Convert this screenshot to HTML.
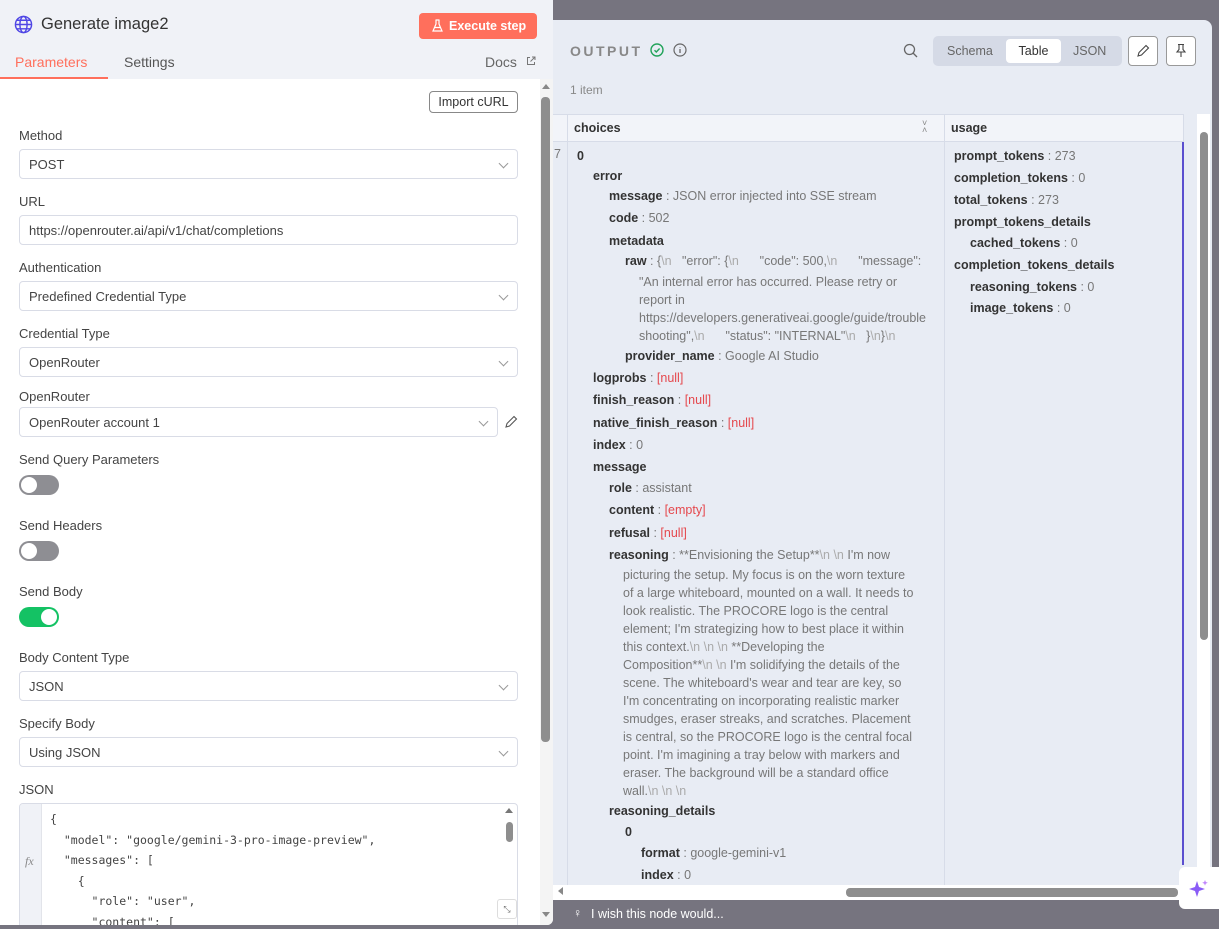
<!DOCTYPE html>
<html><head><meta charset="utf-8"><style>
*{box-sizing:border-box;margin:0;padding:0}
body{width:1219px;height:929px;overflow:hidden;background:#76747f;font-family:"Liberation Sans",sans-serif;position:relative;color:#333}
.a{position:absolute;white-space:nowrap}
#right{position:absolute;left:540px;top:20px;width:672px;height:880px;background:#e8ecf4;border-radius:8px}
#left{position:absolute;left:0;top:0;width:553px;height:925px;background:#fff;border-radius:0 0 6px 0;overflow:hidden}
.lbl{position:absolute;left:19px;font-size:13px;color:#444}
.inp{position:absolute;left:19px;width:499px;height:30px;border:1px solid #d9dce6;border-radius:4px;font-size:13px;color:#444;padding:7px 9px;background:#fff}
.chev{position:absolute;right:10px;top:10px;width:7px;height:7px;border-right:1px solid #999;border-bottom:1px solid #999;transform:rotate(45deg)}
.tog{position:absolute;left:19px;width:40px;height:20px;border-radius:10px;background:#8e8e93}
.tog::after{content:"";position:absolute;left:2px;top:2px;width:16px;height:16px;border-radius:50%;background:#fff}
.tog.on{background:#14c264}.tog.on::after{left:22px}
.t{position:absolute;white-space:nowrap;font-size:12.5px;line-height:18px;color:#777}
.t b{color:#333;font-weight:600}
.n{color:#aaa}
.r{color:#e5484d}
</style></head><body>
<div id="right">
 <div class="a" style="left:30px;top:23px;font-size:14px;letter-spacing:2.5px;color:#888;font-weight:600">OUTPUT</div>
 <svg class="a" style="left:110px;top:23px" width="14" height="14" viewBox="0 0 14 14"><circle cx="7" cy="7" r="6" fill="none" stroke="#22a35a" stroke-width="1.4"/><path d="M4.5 7.2l1.8 1.8 3.3-3.5" fill="none" stroke="#22a35a" stroke-width="1.4"/></svg>
 <svg class="a" style="left:133px;top:23px" width="14" height="14" viewBox="0 0 14 14"><circle cx="7" cy="7" r="6" fill="none" stroke="#666" stroke-width="1.2"/><path d="M7 6v4M7 4v.5" stroke="#666" stroke-width="1.3"/></svg>
 <svg class="a" style="left:363px;top:23px" width="15" height="15" viewBox="0 0 15 15"><circle cx="6.5" cy="6.5" r="5" fill="none" stroke="#666" stroke-width="1.3"/><path d="M10 10l4 4" stroke="#666" stroke-width="1.3"/></svg>
 <div class="a" style="left:393px;top:16px;width:189px;height:30px;background:#d5dae6;border-radius:5px"></div>
 <div class="a" style="left:407px;top:24px;font-size:12.5px;color:#666">Schema</div>
 <div class="a" style="left:466px;top:19px;width:55px;height:24px;background:#fff;border-radius:4px;font-size:12.5px;color:#333;text-align:center;line-height:24px">Table</div>
 <div class="a" style="left:533px;top:24px;font-size:12.5px;color:#666">JSON</div>
 <div class="a" style="left:588px;top:16px;width:30px;height:30px;border:1px solid #999;border-radius:4px;background:#fff"></div>
 <svg class="a" style="left:596px;top:24px" width="14" height="14" viewBox="0 0 14 14"><path d="M2 12l1-3.5 7-7 2.5 2.5-7 7z" fill="none" stroke="#444" stroke-width="1.1"/></svg>
 <div class="a" style="left:626px;top:16px;width:30px;height:30px;border:1px solid #999;border-radius:4px;background:#fff"></div>
 <svg class="a" style="left:634px;top:23px" width="14" height="15" viewBox="0 0 14 15"><path d="M4 1.5h6M5 1.5v5l-2 2.5h8l-2-2.5v-5M7 9v5" fill="none" stroke="#444" stroke-width="1.1"/></svg>
 <div class="a" style="left:30px;top:63px;font-size:12px;color:#888">1 item</div>
 <div class="a" style="left:13px;top:94px;width:631px;height:771px;background:#e8ecf4"></div>
 <div class="a" style="left:13px;top:94px;width:631px;height:28px;background:#f2f4f9;border-top:1px solid #d7dce8;border-bottom:1px solid #d7dce8"></div>
 <div class="a" style="left:27px;top:94px;width:1px;height:771px;background:#d7dce8"></div>
 <div class="a" style="left:404px;top:94px;width:1px;height:771px;background:#d7dce8"></div>
 <div class="a" style="left:643px;top:94px;width:1px;height:28px;background:#d7dce8"></div>
 <div class="a" style="left:642px;top:122px;width:2px;height:723px;background:#5b4fcf"></div>
 <div class="a" style="left:34px;top:101px;font-size:12.5px;font-weight:600;color:#333">choices</div>
 <div class="a" style="left:382px;top:100px;font-size:9px;color:#888;line-height:7px">˅<br>˄</div>
 <div class="a" style="left:411px;top:101px;font-size:12.5px;font-weight:600;color:#333">usage</div>
 <div class="a" style="left:14px;top:127px;font-size:12.5px;color:#777">7</div>
 <div class="a" style="left:657px;top:94px;width:13px;height:771px;background:#fff"></div>
 <div class="a" style="left:660px;top:112px;width:8px;height:508px;background:#8e8e8e;border-radius:4px"></div>
 <div class="a" style="left:13px;top:865px;width:644px;height:15px;background:#fff"></div>
 <div class="a" style="left:306px;top:868px;width:332px;height:9px;background:#8e8e8e;border-radius:4px"></div>
 <div class="a" style="left:18px;top:867px;width:0;height:0;border-top:4px solid transparent;border-bottom:4px solid transparent;border-right:5px solid #888"></div>
</div>
<div class="a" style="left:573px;top:906px;font-size:12px;color:#fff">♀</div>
<div class="a" style="left:591px;top:907px;font-size:12.5px;color:#fff">I wish this node would...</div>
<div class="a" style="left:1179px;top:867px;width:40px;height:42px;background:#fff;border-radius:6px 0 0 6px"></div>
<svg class="a" style="left:1188px;top:878px" width="22" height="22" viewBox="0 0 22 22"><path d="M9 3l2 6 6 2-6 2-2 6-2-6-6-2 6-2z" fill="#8a5cf6"/><path d="M17 2l.8 2 2 .8-2 .8-.8 2-.8-2-2-.8 2-.8z" fill="#c084fc"/></svg>

<div class="t" style="left:577px;top:147px"><b>0</b></div>
<div class="t" style="left:593px;top:167px"><b>error</b></div>
<div class="t" style="left:609px;top:187px"><b>message</b> : JSON error injected into SSE stream</div>
<div class="t" style="left:609px;top:209px"><b>code</b> : 502</div>
<div class="t" style="left:609px;top:232px"><b>metadata</b></div>
<div class="t" style="left:625px;top:252px"><b>raw</b> : {<span class="n">\n</span>&nbsp;&nbsp;&nbsp;"error": {<span class="n">\n</span>&nbsp;&nbsp;&nbsp;&nbsp;&nbsp;&nbsp;"code": 500,<span class="n">\n</span>&nbsp;&nbsp;&nbsp;&nbsp;&nbsp;&nbsp;"message":</div>
<div class="t" style="left:639px;top:273px">"An internal error has occurred. Please retry or</div>
<div class="t" style="left:639px;top:291px">report in</div>
<div class="t" style="left:639px;top:309px">https://developers.generativeai.google/guide/trouble</div>
<div class="t" style="left:639px;top:327px">shooting",<span class="n">\n</span>&nbsp;&nbsp;&nbsp;&nbsp;&nbsp;&nbsp;"status": "INTERNAL"<span class="n">\n</span>&nbsp;&nbsp;&nbsp;}<span class="n">\n</span>}<span class="n">\n</span></div>
<div class="t" style="left:625px;top:347px"><b>provider_name</b> : Google AI Studio</div>
<div class="t" style="left:593px;top:369px"><b>logprobs</b> : <span class="r">[null]</span></div>
<div class="t" style="left:593px;top:391px"><b>finish_reason</b> : <span class="r">[null]</span></div>
<div class="t" style="left:593px;top:414px"><b>native_finish_reason</b> : <span class="r">[null]</span></div>
<div class="t" style="left:593px;top:436px"><b>index</b> : 0</div>
<div class="t" style="left:593px;top:458px"><b>message</b></div>
<div class="t" style="left:609px;top:479px"><b>role</b> : assistant</div>
<div class="t" style="left:609px;top:501px"><b>content</b> : <span class="r">[empty]</span></div>
<div class="t" style="left:609px;top:524px"><b>refusal</b> : <span class="r">[null]</span></div>
<div class="t" style="left:609px;top:546px"><b>reasoning</b> : **Envisioning the Setup**<span class="n">\n \n </span>I'm now</div>
<div class="t" style="left:623px;top:566px">picturing the setup. My focus is on the worn texture</div>
<div class="t" style="left:623px;top:584px">of a large whiteboard, mounted on a wall. It needs to</div>
<div class="t" style="left:623px;top:602px">look realistic. The PROCORE logo is the central</div>
<div class="t" style="left:623px;top:620px">element; I'm strategizing how to best place it within</div>
<div class="t" style="left:623px;top:638px">this context.<span class="n">\n \n \n </span>**Developing the</div>
<div class="t" style="left:623px;top:656px">Composition**<span class="n">\n \n </span>I'm solidifying the details of the</div>
<div class="t" style="left:623px;top:674px">scene. The whiteboard's wear and tear are key, so</div>
<div class="t" style="left:623px;top:692px">I'm concentrating on incorporating realistic marker</div>
<div class="t" style="left:623px;top:710px">smudges, eraser streaks, and scratches. Placement</div>
<div class="t" style="left:623px;top:728px">is central, so the PROCORE logo is the central focal</div>
<div class="t" style="left:623px;top:746px">point. I'm imagining a tray below with markers and</div>
<div class="t" style="left:623px;top:764px">eraser. The background will be a standard office</div>
<div class="t" style="left:623px;top:782px">wall.<span class="n">\n \n \n</span></div>
<div class="t" style="left:609px;top:802px"><b>reasoning_details</b></div>
<div class="t" style="left:625px;top:823px"><b>0</b></div>
<div class="t" style="left:641px;top:844px"><b>format</b> : google-gemini-v1</div>
<div class="t" style="left:641px;top:866px"><b>index</b> : 0</div>

<div class="t" style="left:954px;top:147px"><b>prompt_tokens</b> : 273</div>
<div class="t" style="left:954px;top:169px"><b>completion_tokens</b> : 0</div>
<div class="t" style="left:954px;top:191px"><b>total_tokens</b> : 273</div>
<div class="t" style="left:954px;top:213px"><b>prompt_tokens_details</b></div>
<div class="t" style="left:970px;top:234px"><b>cached_tokens</b> : 0</div>
<div class="t" style="left:954px;top:256px"><b>completion_tokens_details</b></div>
<div class="t" style="left:970px;top:278px"><b>reasoning_tokens</b> : 0</div>
<div class="t" style="left:970px;top:299px"><b>image_tokens</b> : 0</div>

<div id="left">
 <div class="a" style="left:0;top:0;width:553px;height:79px;background:#f0f2f7"></div>
 <svg class="a" style="left:14px;top:15px" width="19" height="19" viewBox="0 0 20 20"><g fill="none" stroke="#4f46e5" stroke-width="1.5"><circle cx="10" cy="10" r="8.5"/><ellipse cx="10" cy="10" rx="3.8" ry="8.5"/><path d="M1.5 10h17M3 5.5h14M3 14.5h14"/></g></svg>
 <div class="a" style="left:41px;top:15px;font-size:16.5px;color:#333">Generate image2</div>
 <div class="a" style="left:419px;top:13px;width:118px;height:26px;background:#ff6f5c;border-radius:4px;color:#fff;font-size:12.5px;font-weight:600;line-height:26px;padding-left:30px">Execute step</div>
 <svg class="a" style="left:432px;top:19px" width="11" height="13" viewBox="0 0 11 13"><path d="M3.5 1h4M4 1v4L1 12h9L7 5V1M2.5 8.5h6" fill="none" stroke="#fff" stroke-width="1.2"/></svg>
 <div class="a" style="left:15px;top:54px;font-size:14px;color:#ff6f5c">Parameters</div>
 <div class="a" style="left:0;top:77px;width:108px;height:2px;background:#ff6f5c"></div>
 <div class="a" style="left:124px;top:54px;font-size:14px;color:#555">Settings</div>
 <div class="a" style="left:485px;top:54px;font-size:14px;color:#666">Docs</div>
 <svg class="a" style="left:526px;top:56px" width="10" height="10" viewBox="0 0 10 10"><path d="M4 1.5H1.5v7h7V6M6 1h3v3M9 1L4.5 5.5" fill="none" stroke="#777" stroke-width="1"/></svg>
 <div class="a" style="left:429px;top:91px;width:89px;height:22px;border:1px solid #888;border-radius:4px;font-size:12.5px;color:#333;text-align:center;line-height:20px">Import cURL</div>
 <div class="a" style="left:540px;top:79px;width:13px;height:846px;background:#f4f4f4"></div>
 <div class="a" style="left:542px;top:84px;width:0;height:0;border-left:4px solid transparent;border-right:4px solid transparent;border-bottom:5px solid #888"></div>
 <div class="a" style="left:541px;top:97px;width:9px;height:645px;background:#8e8e8e;border-radius:4px"></div>
 <div class="a" style="left:542px;top:912px;width:0;height:0;border-left:4px solid transparent;border-right:4px solid transparent;border-top:5px solid #888"></div>

 <div class="lbl" style="top:128px">Method</div>
 <div class="inp" style="top:149px">POST<span class="chev"></span></div>
 <div class="lbl" style="top:194px">URL</div>
 <div class="inp" style="top:215px">https://openrouter.ai/api/v1/chat/completions</div>
 <div class="lbl" style="top:260px">Authentication</div>
 <div class="inp" style="top:281px">Predefined Credential Type<span class="chev"></span></div>
 <div class="lbl" style="top:326px">Credential Type</div>
 <div class="inp" style="top:347px">OpenRouter<span class="chev"></span></div>
 <div class="lbl" style="top:389px">OpenRouter</div>
 <div class="inp" style="top:407px;width:479px">OpenRouter account 1<span class="chev"></span></div>
 <svg class="a" style="left:504px;top:415px" width="14" height="14" viewBox="0 0 14 14"><path d="M2 12l1-3.5 7-7 2.5 2.5-7 7z" fill="none" stroke="#555" stroke-width="1.1"/></svg>
 <div class="lbl" style="top:452px">Send Query Parameters</div>
 <div class="tog" style="top:475px"></div>
 <div class="lbl" style="top:518px">Send Headers</div>
 <div class="tog" style="top:541px"></div>
 <div class="lbl" style="top:584px">Send Body</div>
 <div class="tog on" style="top:607px"></div>
 <div class="lbl" style="top:650px">Body Content Type</div>
 <div class="inp" style="top:671px">JSON<span class="chev"></span></div>
 <div class="lbl" style="top:716px">Specify Body</div>
 <div class="inp" style="top:737px">Using JSON<span class="chev"></span></div>
 <div class="lbl" style="top:782px">JSON</div>
 <div class="a" style="left:19px;top:803px;width:499px;height:125px;border:1px solid #d9dce6;border-radius:4px;background:#fff;overflow:hidden">
  <div class="a" style="left:0;top:0;width:22px;height:125px;background:#f0f2f7;border-right:1px solid #e2e4ea"></div>
  <div class="a" style="left:5px;top:50px;font-family:'Liberation Serif',serif;font-style:italic;font-size:12px;color:#888">fx</div>
  <pre class="a" style="white-space:pre;left:30px;top:5px;font-family:'DejaVu Sans Mono','Liberation Mono',monospace;font-size:11.5px;line-height:20.6px;color:#444">{
  "model": "google/gemini-3-pro-image-preview",
  "messages": [
    {
      "role": "user",
      "content": [</pre>
  <div class="a" style="left:485px;top:4px;width:0;height:0;border-left:4px solid transparent;border-right:4px solid transparent;border-bottom:5px solid #777"></div>
  <div class="a" style="left:486px;top:18px;width:7px;height:20px;background:#8e8e8e;border-radius:4px"></div>
  <div class="a" style="left:477px;top:95px;width:20px;height:20px;border:1px solid #ddd;border-radius:3px;background:#fff;font-size:9px;color:#777;text-align:center;line-height:18px">⤡</div>
 </div>
</div>
</body></html>
